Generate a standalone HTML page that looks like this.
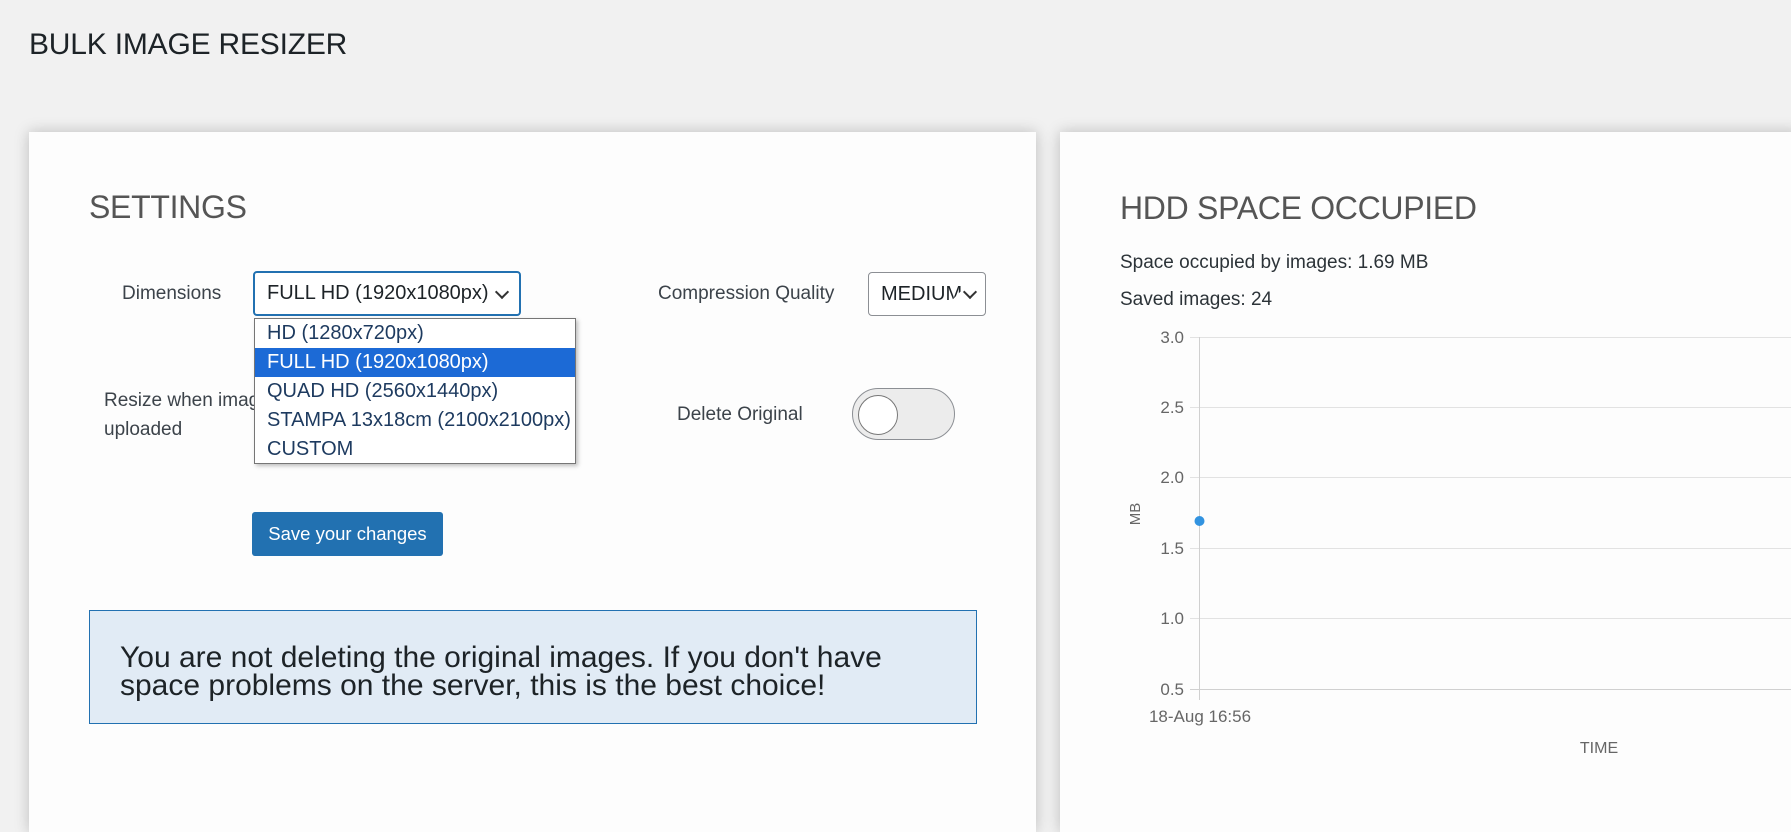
<!DOCTYPE html>
<html><head><meta charset="utf-8"><style>
*{box-sizing:border-box;margin:0;padding:0}
body{width:1791px;height:817px;overflow:hidden;background:#f1f1f1;font-family:"Liberation Sans",sans-serif;position:relative;color:#1d2327}
.a{position:absolute;white-space:nowrap}
.card{position:absolute;background:#fdfdfd;box-shadow:0 0 14px rgba(0,0,0,.22)}
.h{font-size:32px;color:#555;letter-spacing:-.3px}
.lbl{font-size:19px;color:#3c434a}
.sel{position:absolute;border:1px solid #8c8f94;border-radius:4px;background:#fff;font-size:20px;color:#1d2327;overflow:hidden;padding-left:12px;line-height:42px}
.chev{position:absolute;right:10px;top:14px;width:10px;height:10px;border-right:2.5px solid #333;border-bottom:2.5px solid #333;transform:rotate(45deg)}
.dd{position:absolute;left:254px;top:318px;width:322px;height:146px;background:#fff;border:1px solid #767676;box-shadow:2px 2px 4px rgba(0,0,0,.25);font-size:20px;color:#1d3a5f}
.dd div{height:29px;line-height:29px;padding-left:12px;white-space:nowrap}
</style></head><body>
<div class="a" style="left:29px;top:28px;font-size:30px;color:#1d2327;letter-spacing:-.2px">BULK IMAGE RESIZER</div>

<div class="card" style="left:29px;top:132px;width:1007px;height:700px"></div>
<div class="card" style="left:1060px;top:132px;width:740px;height:700px"></div>

<div class="a h" style="left:89px;top:189px">SETTINGS</div>
<div class="a lbl" style="left:122px;top:283px">Dimensions</div>
<div class="sel" style="left:253px;top:271px;width:268px;height:45px;border:2px solid #2271b1;line-height:41px">FULL HD (1920x1080px)<span class="chev" style="right:12px;background:#fff;box-shadow:6px 6px 0 7px #fff"></span></div>
<div class="a lbl" style="left:658px;top:283px">Compression Quality</div>
<div class="sel" style="left:868px;top:272px;width:118px;height:44px">MEDIUM<span class="chev" style="background:#fff;box-shadow:6px 6px 0 8px #fff"></span></div>

<div class="a lbl" style="left:104px;top:390px">Resize when images are</div>
<div class="a lbl" style="left:104px;top:419px">uploaded</div>
<div class="a lbl" style="left:677px;top:404px">Delete Original</div>
<div class="a" style="left:852px;top:388px;width:103px;height:52px;border:1px solid #8c8f94;border-radius:26px;background:#ececec"></div>
<div class="a" style="left:858px;top:395px;width:40px;height:40px;border:1px solid #777;border-radius:50%;background:#fff"></div>

<div class="dd">
<div>HD (1280x720px)</div>
<div style="background:#1c6ad6;color:#fff">FULL HD (1920x1080px)</div>
<div>QUAD HD (2560x1440px)</div>
<div>STAMPA 13x18cm (2100x2100px)</div>
<div>CUSTOM</div>
</div>

<div class="a" style="left:252px;top:512px;width:191px;height:44px;background:#2271b1;border-radius:3px;color:#fff;font-size:18.5px;line-height:44px;text-align:center">Save your changes</div>

<div class="a" style="left:89px;top:610px;width:888px;height:114px;background:#e1ebf5;border:1px solid #2271b1"></div>
<div class="a" style="left:120px;top:644px;font-size:30px;line-height:28px;color:#1d2327">You are not deleting the original images. If you don't have<br>space problems on the server, this is the best choice!</div>

<div class="a h" style="left:1120px;top:190px">HDD SPACE OCCUPIED</div>
<div class="a" style="left:1120px;top:252px;font-size:19px;color:#2c3338">Space occupied by images: 1.69 MB</div>
<div class="a" style="left:1120px;top:289px;font-size:19px;color:#2c3338">Saved images: 24</div>

<svg class="a" style="left:1060px;top:320px" width="731" height="450">
<g stroke="#e2e2e2" stroke-width="1">
<line x1="130" y1="17.5" x2="731" y2="17.5"/>
<line x1="130" y1="87.5" x2="731" y2="87.5"/>
<line x1="130" y1="157.5" x2="731" y2="157.5"/>
<line x1="130" y1="228.5" x2="731" y2="228.5"/>
<line x1="130" y1="298.5" x2="731" y2="298.5"/>
</g>
<line x1="130" y1="369.5" x2="731" y2="369.5" stroke="#d0d0d0"/>
<line x1="139.5" y1="17" x2="139.5" y2="380" stroke="#d0d0d0"/>
<g text-anchor="end" font-family="Liberation Sans, Arial, sans-serif" font-size="17" fill="#666">
<text x="124" y="23">3.0</text><text x="124" y="93">2.5</text><text x="124" y="163">2.0</text>
<text x="124" y="234">1.5</text><text x="124" y="304">1.0</text><text x="124" y="375">0.5</text>
</g>
<text x="140" y="402" text-anchor="middle" font-family="Liberation Sans, Arial, sans-serif" font-size="17" fill="#666">18-Aug 16:56</text>
<text x="539" y="433" text-anchor="middle" font-family="Liberation Sans, Arial, sans-serif" font-size="16" fill="#666">TIME</text>
<text transform="translate(80,194) rotate(-90)" text-anchor="middle" font-family="Liberation Sans, Arial, sans-serif" font-size="15" fill="#666">MB</text>
<circle cx="139.5" cy="201" r="5" fill="#3293e0"/>
</svg>
</body></html>
